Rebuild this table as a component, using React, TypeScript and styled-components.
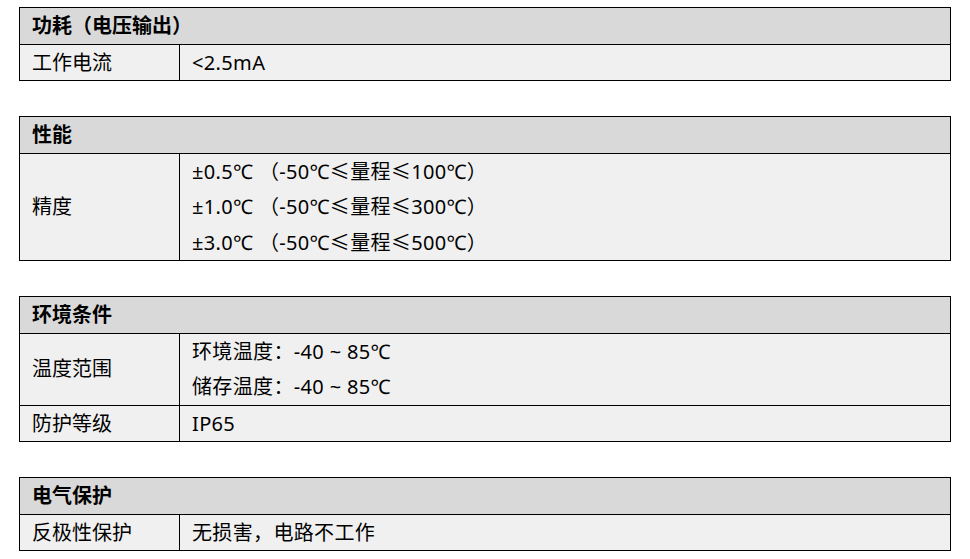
import React from "react";
import styled, { createGlobalStyle } from "styled-components";

const Global = createGlobalStyle`
  html, body { margin: 0; padding: 0; background: #ffffff; }
  body {
    font-family: "Noto Sans", "Noto Sans CJK SC", sans-serif;
    color: #000;
  }
`;

const Page = styled.div`
  padding: 7px 0 0 19px;
  display: flex;
  flex-direction: column;
  gap: 35px;
`;

const Table = styled.table`
  width: 932px;
  border-collapse: collapse;
  table-layout: fixed;
  font-size: 20px;
`;

const HeadCell = styled.th`
  background: #d9d9d9;
  border: 1px solid #000;
  text-align: left;
  font-weight: 700;
  padding: 0 12px;
  height: 35.5px;
  line-height: 35.5px;
`;

const LabelCell = styled.td`
  background: #f0f0f0;
  border: 1px solid #000;
  padding: 0 12px;
  line-height: 35.5px;
  vertical-align: middle;
  white-space: nowrap;
`;

const ValueCell = styled.td`
  background: #f0f0f0;
  border: 1px solid #000;
  padding: 0 12px;
  line-height: 35.5px;
  vertical-align: middle;
  white-space: pre;
  letter-spacing: 0.35px;
`;

const Line = styled.div`
  height: 35.5px;
`;

type Row = { label: string; values: string[] };
type Section = { title: string; rows: Row[] };

const sections: Section[] = [
  { title: "功耗（电压输出）", rows: [{ label: "工作电流", values: ["<2.5mA"] }] },
  {
    title: "性能",
    rows: [
      {
        label: "精度",
        values: [
          "±0.5℃ （-50℃≤量程≤100℃）",
          "±1.0℃ （-50℃≤量程≤300℃）",
          "±3.0℃ （-50℃≤量程≤500℃）",
        ],
      },
    ],
  },
  {
    title: "环境条件",
    rows: [
      { label: "温度范围", values: ["环境温度：-40 ~ 85℃", "储存温度：-40 ~ 85℃"] },
      { label: "防护等级", values: ["IP65"] },
    ],
  },
  { title: "电气保护", rows: [{ label: "反极性保护", values: ["无损害，电路不工作"] }] },
];

export default function App() {
  return (
    <>
      <Global />
      <Page>
        {sections.map((s) => (
          <Table key={s.title}>
            <colgroup>
              <col style={{ width: 160 }} />
              <col />
            </colgroup>
            <thead>
              <tr>
                <HeadCell colSpan={2}>{s.title}</HeadCell>
              </tr>
            </thead>
            <tbody>
              {s.rows.map((r) => (
                <tr key={r.label}>
                  <LabelCell>{r.label}</LabelCell>
                  <ValueCell>
                    {r.values.map((v) => (
                      <Line key={v}>{v}</Line>
                    ))}
                  </ValueCell>
                </tr>
              ))}
            </tbody>
          </Table>
        ))}
      </Page>
    </>
  );
}
